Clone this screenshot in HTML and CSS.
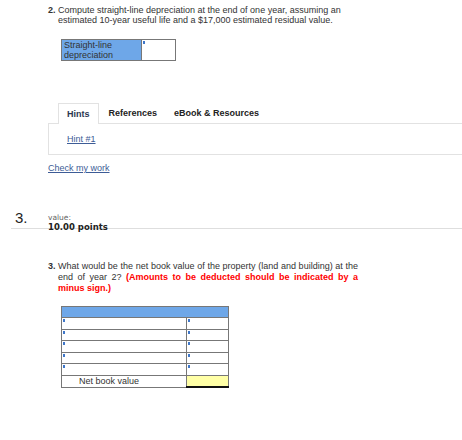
FILE: index.html
```html
<!DOCTYPE html>
<html lang="en">
<head>
    <meta charset="UTF-8">
    <title>Depreciation Questions</title>
    <link rel="stylesheet" href="styles.css">
</head>
<body>
    <div class="page">
        <section class="part part-2">
            <p class="question">
                <b class="q-num">2.</b>
                <span class="q-text q-text-2">Compute straight-line depreciation at the end of one year, assuming an estimated 10-year useful life and a $17,000 estimated residual value.</span>
            </p>

            <table class="answer-box">
                <tr>
                    <td class="answer-label">Straight-line depreciation</td>
                    <td class="answer-entry mark"></td>
                </tr>
            </table>

            <div class="hints">
                <div class="tabs">
                    <span class="tab active">Hints</span>
                    <span class="tab">References</span>
                    <span class="tab">eBook &amp; Resources</span>
                </div>
                <div class="tab-panel">
                    <a href="#" class="link">Hint #1</a>
                </div>
            </div>

            <a href="#" class="link check">Check my work</a>
        </section>

        <div class="item-head">
            <div class="item-num">3.</div>
            <div class="item-value">
                <div class="value-label">value:</div>
                <div class="points">10.00 points</div>
            </div>
        </div>

        <section class="part part-3">
            <p class="question">
                <b class="q-num">3.</b>
                <span class="q-text q-text-3">What would be the net book value of the property (land and building) at the end of year 2? <b class="warn">(Amounts to be deducted should be indicated by a minus sign.)</b></span>
            </p>

            <table class="grid">
                <tr class="grid-head"><td colspan="2"></td></tr>
                <tr><td class="mark"></td><td class="mark amount"></td></tr>
                <tr><td class="mark"></td><td class="mark amount"></td></tr>
                <tr><td class="mark"></td><td class="mark amount"></td></tr>
                <tr><td class="mark"></td><td class="mark amount"></td></tr>
                <tr><td class="mark"></td><td class="mark amount"></td></tr>
                <tr>
                    <td class="total-label">Net book value</td>
                    <td class="amount total"></td>
                </tr>
            </table>
        </section>
    </div>
</body>
</html>
```

FILE: styles.css
```css
body {
    margin: 0;
    font-family: "Liberation Sans", Arial, sans-serif;
    color: #333;
    background: #fff;
    overflow: hidden;
}

.page {
    padding-top: 5px;
}

.part {
    padding-left: 48px;
}

.question {
    display: flex;
    margin: 0;
    font-size: 9px;
    line-height: 10px;
}

.q-num {
    width: 10px;
    flex-shrink: 0;
}

.q-text-2 {
    width: 288px;
}

.q-text-3 {
    width: 300px;
    text-align: justify;
    line-height: 11px;
}

.warn {
    color: #ff0000;
}

/* answer box for part 2 */
.answer-box {
    margin: 14px 0 0 13px;
    border-collapse: collapse;
    border: 1px solid #777;
    font-size: 9px;
    line-height: 10px;
}

.answer-box td {
    box-sizing: border-box;
    padding: 0;
    height: 21px;
    vertical-align: top;
}

.answer-label {
    width: 80px;
    padding-left: 2px !important;
    background: #6ea7e8;
    border-right: 1px solid #777;
}

.answer-entry {
    width: 34px;
}

.mark {
    background: linear-gradient(#3f77c9, #3f77c9) no-repeat 1px 1px / 2px 3px;
}

/* hint tabs */
.hints {
    margin-top: 42px;
}

.tabs {
    display: flex;
    padding-left: 10px;
    font-size: 9px;
    font-weight: bold;
}

.tab {
    height: 20px;
    line-height: 21px;
    padding: 0 8px;
    margin-right: 1px;
    color: #222;
}

.tab.active {
    border: 1px solid #e2e2e2;
    border-bottom: none;
    color: #2b3650;
    background: #fff;
    margin-bottom: -1px;
    margin-right: 2px;
    position: relative;
}

.tab-panel {
    border: 1px solid #e2e2e2;
    border-right: none;
    height: 30px;
    padding-left: 18px;
    font-size: 9px;
    line-height: 31px;
}

.link {
    color: #3d5c96;
    text-decoration: underline;
}

.check {
    display: block;
    width: max-content;
    margin-top: 8px;
    font-size: 9px;
    line-height: 10px;
}

/* item header */
.item-head {
    display: flex;
    margin: 36px 0 0 11px;
    border-bottom: 1px solid #dedede;
    height: 19px;
}

.item-num {
    width: 33px;
    padding: 2px 0 0 4px;
    font-size: 15px;
    line-height: 14px;
    color: #222;
}

.item-value {
    padding-top: 4px;
    font-family: "DejaVu Sans", Verdana, sans-serif;
}

.value-label {
    font-size: 7.5px;
    line-height: 9px;
    color: #666;
}

.points {
    font-size: 8.5px;
    font-weight: bold;
    line-height: 10px;
    color: #222;
}

/* part 3 */
.part-3 {
    margin-top: 32px;
}

.grid {
    margin: 12px 0 0 13px;
    border-collapse: collapse;
    border: 1px solid #777;
    font-size: 9px;
}

.grid td {
    box-sizing: border-box;
    padding: 0;
    height: 11.6px;
    border: 1px solid #777;
    line-height: 10px;
}

.grid-head td {
    background: #6ea7e8;
    height: 11px;
}

.grid td:first-child {
    width: 125px;
}

.grid td.amount {
    width: 42px;
}

.grid td.total-label {
    padding-left: 17px;
}

.grid td.total {
    background: #ffffa6;
    border-top: 1px solid #111;
    border-bottom: 2px solid #111;
}
```
